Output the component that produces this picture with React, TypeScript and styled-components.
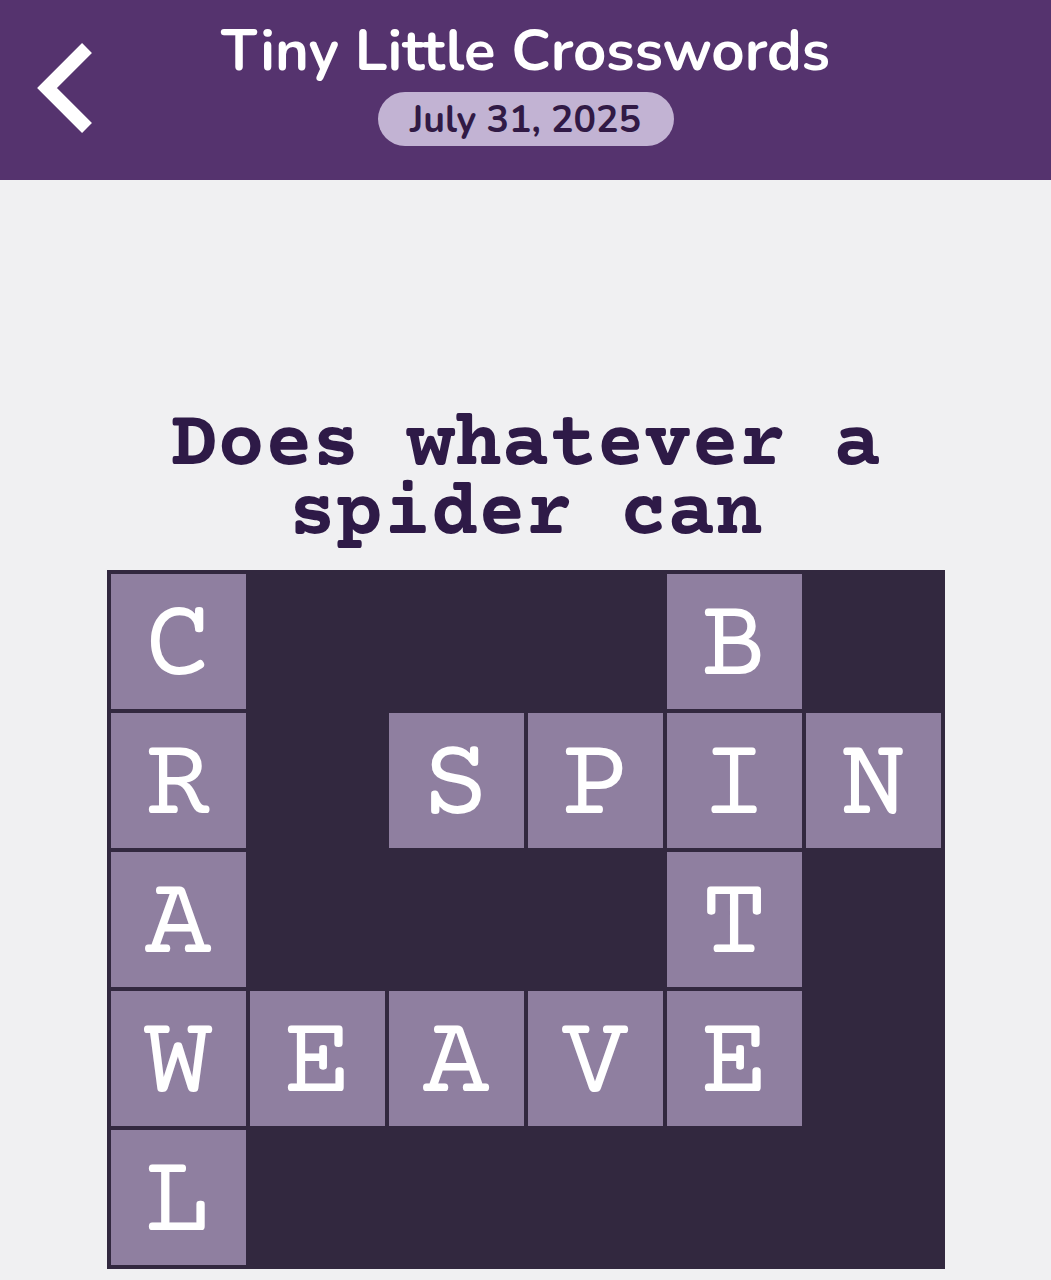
import React from "react";
import styled, { createGlobalStyle } from "styled-components";

const GlobalStyle = createGlobalStyle`
  html, body {
    margin: 0;
    padding: 0;
    background: #f0f0f2;
  }
  body {
    font-family: "Nunito", "Lato", "Open Sans", sans-serif;
  }
`;

const Page = styled.div`
  width: 1051px;
  min-height: 1280px;
  background: #f0f0f2;
  display: flex;
  flex-direction: column;
`;

const Header = styled.header`
  height: 180px;
  background: #55336e;
  display: flex;
  flex-direction: column;
  align-items: center;
  position: relative;
  box-sizing: border-box;
  padding-top: 17px;
`;

const BackButton = styled.button`
  position: absolute;
  left: 30px;
  top: 38px;
  width: 72px;
  height: 100px;
  border: none;
  background: transparent;
  padding: 0;
  cursor: pointer;
`;

const Title = styled.h1`
  margin: 0;
  color: #ffffff;
  font-family: "Nunito", "Lato", sans-serif;
  font-weight: 700;
  font-size: 58px;
  line-height: 68px;
`;

const DatePill = styled.div`
  margin-top: 7px;
  height: 54px;
  width: 296px;
  border-radius: 27px;
  background: #c2b3d3;
  color: #311a45;
  display: flex;
  align-items: center;
  justify-content: center;
  font-family: "Nunito", "Lato", sans-serif;
  font-weight: 700;
  font-size: 37.5px;
`;

const Main = styled.main`
  display: flex;
  flex-direction: column;
  align-items: center;
  padding-top: 232px;
`;

const Clue = styled.h2`
  margin: 0 0 20px;
  width: 900px;
  text-align: center;
  color: #2e1a47;
  font-family: "Courier Prime", "Nimbus Mono PS", "FreeMono", "Courier New", "Liberation Mono", monospace;
  font-weight: 700;
  font-size: 79px;
  line-height: 69px;
`;

const Board = styled.div`
  display: grid;
  grid-template-columns: repeat(6, 135px);
  grid-auto-rows: 135px;
  gap: 4px;
  padding: 4px;
  background: #32283f;
`;

const Cell = styled.div<{ $filled: boolean }>`
  background: ${(p) => (p.$filled ? "#8f7fa0" : "transparent")};
  color: #ffffff;
  display: flex;
  align-items: center;
  justify-content: center;
  box-sizing: border-box;
  padding-top: 14px;
  font-family: "Courier Prime", "Nimbus Mono PS", "FreeMono", "Courier New", "Liberation Mono", monospace;
  font-size: 112px;
  line-height: 1;
`;

const rows = [
  "C___B_",
  "R_SPIN",
  "A___T_",
  "WEAVE_",
  "L_____",
];

function Chevron() {
  return (
    <svg width="72" height="100" viewBox="0 0 72 100" aria-hidden="true">
      <path
        d="M57 10 L17 50 L57 90"
        fill="none"
        stroke="#ffffff"
        strokeWidth="14"
        strokeLinejoin="miter"
        strokeLinecap="butt"
      />
    </svg>
  );
}

export default function App() {
  return (
    <Page>
      <GlobalStyle />
      <Header>
        <BackButton aria-label="Back">
          <Chevron />
        </BackButton>
        <Title>Tiny Little Crosswords</Title>
        <DatePill>July 31, 2025</DatePill>
      </Header>
      <Main>
        <Clue>Does whatever a spider can</Clue>
        <Board>
          {rows.flatMap((row, r) =>
            row.split("").map((ch, c) => (
              <Cell key={`${r}-${c}`} $filled={ch !== "_"}>
                {ch !== "_" ? ch : ""}
              </Cell>
            ))
          )}
        </Board>
      </Main>
    </Page>
  );
}
